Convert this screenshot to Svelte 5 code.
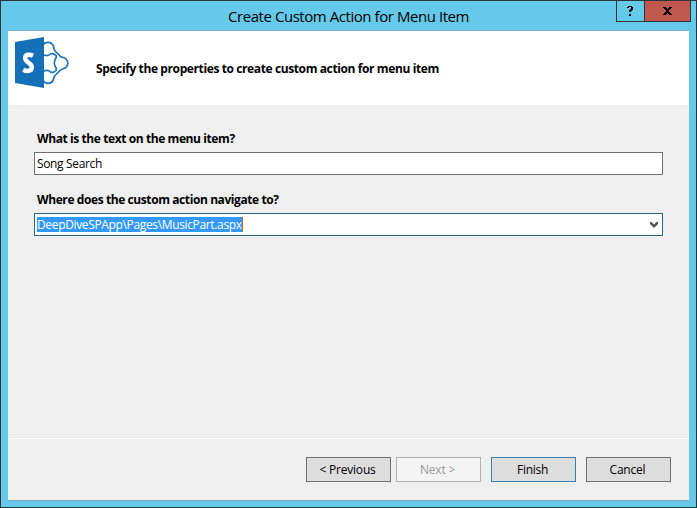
<script>
  let menuText = $state('Song Search');
  const target = 'DeepDiveSPApp\\Pages\\MusicPart.aspx';
  const buttons = [
    { label: '< Previous', kind: 'previous', ls: -0.2 },
    { label: 'Next >', kind: 'next', ls: -0.2 },
    { label: 'Finish', kind: 'finish', ls: -0.3 },
    { label: 'Cancel', kind: 'cancel', ls: -0.2 }
  ];
</script>

<div class="window">
  <header class="titlebar">
    <h1>Create Custom Action for Menu Item</h1>
    <div class="controls">
      <button class="help" aria-label="Help">
        <svg width="7" height="10" viewBox="0 0 7 10" shape-rendering="crispEdges"><path d="M0 1h1V0h4v1h1v3H5v1H4v1H2V4h1V3h1V1H2v1H0zM2 8h2v2H2z" /></svg>
      </button>
      <button class="close" aria-label="Close">
        <svg width="9" height="8" viewBox="0 0 9 8" shape-rendering="crispEdges"><path d="M0 0h3v1h1v1h1V1h1V0h3v1H8v1H7v1H6v2h1v1h1v1h1v1H6V7H5V6H4v1H3v1H0V7h1V6h1V5h1V3H2V2H1V1H0z" /></svg>
      </button>
    </div>
  </header>
  <main>
    <section class="banner">
      <svg class="logo" width="56" height="52" viewBox="0 0 56 52">
        <g fill="none" stroke="#1a75bc" stroke-width="1.7" stroke-linejoin="round">
          <path d="M28 8C30 4.500 36 4 38.500 9C39 11 38.500 12.500 40 14L45.500 19.500C47 20.500 49 20 51 22C53.500 24.500 53.300 28 51 30.300C49 32 47 31.500 45.500 33L40 38.500C38.500 40 39 41.500 38 43.500C35.500 47.500 30 47 28 43.500" />
          <path d="M28 17.500C31 19 34 18.500 35.500 17C37.500 16 39 16.500 41 18.500C42.200 20 41.200 21 40 22.500C39 25 39 27 40 29.500C41.200 31 42.200 32 41 33.500C39 35.500 37.500 36 35.500 35C34 33.500 31 33 28 34.500" />
        </g>
        <path fill="#1570b8" d="M0 5L29 0v51L0 46z" />
        <path fill="none" stroke="#fff" stroke-width="4.500" d="M18 18.700C15 17.200 10.200 16.800 10.200 21C10.200 26 16.800 25.200 16.800 30.200C16.800 34.500 11.800 34.700 8.300 32.700" />
      </svg>
      <h2>Specify the properties to create custom action for menu item</h2>
    </section>
    <section class="form">
      <label class="first" for="text">What is the text on the menu item?</label>
      <input id="text" bind:value={menuText} />
      <label class="second" for="target">Where does the custom action navigate to?</label>
      <div id="target" class="combo" role="combobox" aria-expanded="false" aria-controls="target" tabindex="0">
        <span class="selection">{target}</span>
        <svg width="8" height="6" viewBox="0 0 8 6"><path d="M0 0h1.500L4 2.500L6.500 0H8v2L4 6L0 2z" fill="#555" /></svg>
      </div>
    </section>
    <footer>
      {#each buttons as b}
        <button class={b.kind} disabled={b.kind === 'next'} style:letter-spacing="{b.ls}px">{b.label}</button>
      {/each}
    </footer>
  </main>
</div>

<style>
  :global(body) { margin: 0; }
  .window {
    box-sizing: border-box; width: 697px; height: 508px; padding: 0 7px 6px;
    border: 1px solid #2e3338; background: #65c9e9; color: #000;
    font: 12px/16px "Open Sans", "Noto Sans", sans-serif;
    display: flex; flex-direction: column; overflow: hidden;
  }
  h1, h2 { margin: 0; }
  .titlebar { height: 29px; flex: none; display: flex; position: relative; justify-content: center; border-bottom: 1px solid #7baec4; }
  h1 { font-size: 15px; font-weight: 400; line-height: 20px; padding-top: 5px; letter-spacing: -0.44px; white-space: nowrap; }
  .controls { position: absolute; right: -2px; top: -1px; display: flex; }
  .controls button { box-sizing: border-box; height: 22px; border: 1px solid #2e3338; padding: 0; display: flex; align-items: center; justify-content: center; }
  .help { width: 29px; background: #65c9e9; }
  .close { width: 47px; margin-left: -1px; background: #c1584f; }
  main { flex: 1; display: flex; flex-direction: column; background: #efefef; border-bottom: 1px solid #7baec4; }
  .banner { height: 74px; background: #fff; display: flex; align-items: flex-start; }
  .logo { margin: 6px 0 0 7px; }
  h2 { font-size: 12px; font-weight: 700; line-height: 16px; margin: 30px 0 0 25px; letter-spacing: -0.39px; white-space: nowrap; }
  .form { flex: 1; padding: 0 26px; display: flex; flex-direction: column; }
  label { font-weight: 700; height: 16px; letter-spacing: -0.41px; margin-left: 3px; white-space: nowrap; }
  .first { margin-top: 26px; margin-bottom: 5px; }
  .second { margin-top: 17px; margin-bottom: 5px; }
  input, .combo { box-sizing: border-box; width: 629px; height: 23px; border: 1px solid #707070; border-radius: 0; background: #fff; padding: 0 4px 0 2px; font: inherit; color: #000; outline: none; letter-spacing: -0.35px; }
  .combo { display: flex; align-items: center; justify-content: space-between; border-color: #2c628b; }
  .selection { background: #3399ff; color: #fff; height: 15px; line-height: 15px; border-right: 1px solid #cc6600; letter-spacing: -0.35px; white-space: nowrap; }
  footer { border-top: 1px solid #fff; display: flex; justify-content: flex-end; padding: 18px 18px 0 0; box-sizing: border-box; height: 62px; }
  footer button { box-sizing: border-box; width: 85px; height: 25px; padding: 0 2px 0 0; border: 1px solid #707070; border-radius: 0; background: #ddd; color: #000; font: inherit; }
  .next { margin-left: 5px; background: #f4f4f4; border-color: #adb2b5; color: #999; }
  .finish { margin-left: 10px; border-color: #3c7fb1; }
  .cancel { margin-left: 10px; }
</style>
